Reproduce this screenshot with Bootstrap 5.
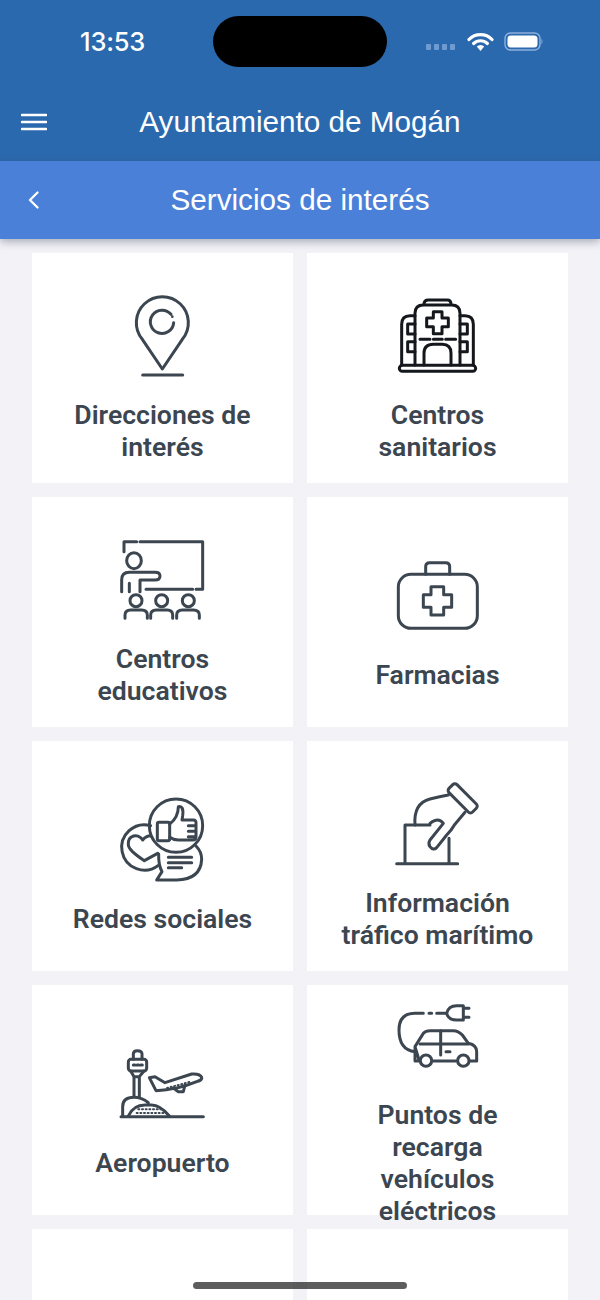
<!DOCTYPE html>
<html lang="es">
<head>
<meta charset="utf-8">
<title>Servicios de interés</title>
<link href="https://cdn.jsdelivr.net/npm/bootstrap@5.3.0/dist/css/bootstrap.min.css" rel="stylesheet">
<style>
html,body{height:1300px;overflow:hidden}
body{background:#f2f2f7;font-family:"Liberation Sans",Arial,sans-serif;position:relative}
.top-head{background:#2b69ae;color:#fff}
.status-row{display:grid;grid-template-columns:1fr 174px 1fr;height:83px;padding-top:16px}
.clock{font-size:25.5px;line-height:51px;padding-left:80px;height:51px;font-family:"Inter","Liberation Sans",sans-serif;font-weight:500;letter-spacing:-.2px}
.island{background:#000;height:51px;border-radius:26px}
.status-icons{height:50px;padding-left:39px}
.sig-dots{width:30px;height:6px;margin-top:12px;margin-right:11px}
.bar-row{display:grid;grid-template-columns:1fr auto 1fr;align-items:center;height:78px}
.bar-title{font-size:29.7px;line-height:36px;white-space:nowrap}
.sub-bar{background:#4b80d8;color:#fff;box-shadow:0 3px 8px rgba(40,50,70,.35);position:relative}
.bar-lead{padding-left:21px}
.back-lead{padding-left:28px}
.tile-grid{display:grid;grid-template-columns:261px 261px;gap:14px;padding:14px 32px 0;justify-content:space-between;height:1061px;overflow:hidden}
.tile{background:#fff;height:230px;display:flex;flex-direction:column;align-items:center;text-align:center}
.tile svg{display:block;flex:none;fill:none;stroke:#3c4650;stroke-width:9;stroke-linecap:round;stroke-linejoin:round}
.tile svg .solid{fill:#3c4650;stroke:none}
.tile-label{color:#3c4650;font-family:Roboto,"Liberation Sans",sans-serif;font-weight:600;font-size:26.6px;line-height:32px;width:205px;flex:none}
.ic-pin{width:100px;height:110px;margin-top:27px;margin-bottom:9px;margin-right:5px}
.ic-hosp{width:105px;height:100px;margin-top:32px;margin-bottom:14px}
.ic-hosp.stroke-dark{stroke:#14181c}
.ic-teach{width:105px;height:100px;margin-top:33px;margin-bottom:13px}
.ic-kit{width:105px;height:90px;margin-top:53px;margin-bottom:19px}
.ic-soc{width:105px;height:100px;margin-top:49px;margin-bottom:13px}
.ic-vote{width:105px;height:100px;margin-top:34px;margin-bottom:12px}
.ic-air{width:105px;height:85px;margin-top:55px;margin-bottom:22px}
.ic-ev{width:105px;height:85px;margin-top:10px;margin-bottom:19px}
.home-bar{position:absolute;left:193px;top:1282px;width:214px;height:7px;border-radius:4px;background:rgba(30,30,30,.72)}
</style>
</head>
<body>
<header class="top-head">
  <div class="status-row">
    <div class="clock">13:53</div>
    <div class="island"></div>
    <div class="status-icons d-flex align-items-center">
      <svg class="sig-dots" viewBox="0 0 30 6"><g fill="#6f9bd0"><rect x="0" y="0" width="5" height="6" rx="1"/><rect x="8" y="0" width="5" height="6" rx="1"/><rect x="16" y="0" width="5" height="6" rx="1"/><rect x="24" y="0" width="5" height="6" rx="1"/></g></svg>
      <svg width="27" height="19" viewBox="0 0 27 19"><path d="M2 7.5A16 16 0 0 1 25 7.5" fill="none" stroke="#fff" stroke-width="3.2" stroke-linecap="round"/><path d="M6.6 11.5A10 10 0 0 1 20.4 11.5" fill="none" stroke="#fff" stroke-width="3.2" stroke-linecap="round"/><path d="M9.8 14.5A5.2 5.2 0 0 1 17.2 14.5L13.5 19Z" fill="#fff"/></svg>
      <svg class="ms-2" width="42" height="19" viewBox="0 0 42 19"><rect x="3" y="1" width="35" height="17" rx="5.5" fill="none" stroke="#8db0dc" stroke-width="1.4"/><rect x="5.5" y="3.5" width="30" height="12" rx="3.5" fill="#fff"/><path d="M39.5 6.5Q41.5 9.5 39.5 12.5Z" fill="#8db0dc"/></svg>
    </div>
  </div>
  <div class="bar-row">
    <div class="bar-lead">
      <svg class="d-block" width="26" height="18" viewBox="0 0 26 18"><path d="M1 2H25M1 9H25M1 16H25" stroke="#fff" stroke-width="2.6" stroke-linecap="round"/></svg>
    </div>
    <div class="bar-title">Ayuntamiento de Mogán</div>
    <div></div>
  </div>
</header>
<div class="sub-bar bar-row">
  <div class="back-lead">
    <svg class="d-block" width="11" height="18" viewBox="0 0 11 18"><path d="M9.5 1.5 2 9l7.5 7.5" fill="none" stroke="#fff" stroke-width="2.3" stroke-linecap="round" stroke-linejoin="round"/></svg>
  </div>
  <div class="bar-title">Servicios de interés</div>
  <div></div>
</div>
<main class="tile-grid">
  <div class="tile">
    <svg class="ic-pin" viewBox="0 0 300 330"><path d="M157 267 97 178A78 78 0 1 1 217 178Z"/><path d="M183 103A35 35 0 1 0 191 128"/><circle class="solid" cx="187" cy="110" r="4"/><path d="M98 285H218"/></svg>
    <div class="tile-label">Direcciones de interés</div>
  </div>
  <div class="tile">
    <svg class="ic-hosp stroke-dark" viewBox="0 0 315 300"><path d="M117 58Q117 45 130 45H187Q198 45 198 58"/><path d="M90 240V85Q90 60 115 60H200Q225 60 225 85V240"/><path d="M90 92H75Q50 92 50 118V240M225 92H240Q265 92 265 118V240"/><path d="M90 117H68V147H90M90 170H68V200H90M225 117H247V147H225M225 170H247V200H225"/><path d="M145 80H171V99H190V125H171V146H145V125H125V99H145Z"/><path d="M105 163H135M145 163H172M182 163H212"/><path d="M117 240V205Q117 178 145 178H172Q198 178 198 205V240"/><rect x="43" y="241" width="229" height="18" rx="9"/></svg>
    <div class="tile-label">Centros sanitarios</div>
  </div>
  <div class="tile">
    <svg class="ic-teach" viewBox="0 0 315 300"><path d="M42 65V35H80M90 35H278V178H258M248 178H108"/><ellipse cx="72" cy="92" rx="22" ry="24"/><path d="M35 185V150Q35 127 58 127H135Q150 127 150 138Q150 150 135 150H90V185M58 160V185"/><circle cx="78" cy="212" r="18"/><circle cx="155" cy="212" r="18"/><circle cx="235" cy="212" r="18"/><path d="M45 265V255Q45 240 62 240H95Q112 240 112 255V265M122 265V255Q122 240 139 240H172Q188 240 188 255V265M200 265V255Q200 240 217 240H250Q268 240 268 255V265"/></svg>
    <div class="tile-label">Centros educativos</div>
  </div>
  <div class="tile">
    <svg class="ic-kit" viewBox="0 0 315 270"><rect x="40" y="73" width="237" height="162" rx="38"/><path d="M122 73V50Q122 38 134 38H182Q194 38 194 50V73"/><path d="M138 110H176V134H200V172H176V195H138V172H115V134H138Z"/></svg>
    <div class="tile-label">Farmacias</div>
  </div>
  <div class="tile">
    <svg class="ic-soc" viewBox="0 0 315 300"><circle cx="198" cy="107" r="80"/><rect x="142" y="97" width="37" height="55" rx="5"/><path d="M179 102Q205 82 205 50Q222 46 218 77L216 90H250Q259 90 258 100V140Q258 150 248 150H205Q190 150 179 142M258 107H235M258 124H235M258 140H235"/><path d="M122 107A68 68 0 1 0 145 226"/><path d="M122 137Q108 137 98 150C85 128 52 135 55 165C57 182 85 200 103 212L143 190"/><path d="M258 168Q275 185 275 208Q272 268 200 270H140L156 245Q145 225 146 192"/><path d="M175 202H245M175 218H245M175 233H215"/></svg>
    <div class="tile-label">Redes sociales</div>
  </div>
  <div class="tile">
    <svg class="ic-vote" viewBox="0 0 315 300"><path d="M35 266H218M60 266V150H135M192 190V266"/><path d="M90 150Q85 85 135 72Q165 65 190 60M240 112 208 150Q200 165 185 180L155 218Q145 228 135 215Q128 205 135 195L175 145Q160 125 135 145"/><rect x="183" y="53" width="100" height="34" rx="9" transform="rotate(45 233 70)"/></svg>
    <div class="tile-label">Información tráfico marítimo</div>
  </div>
  <div class="tile">
    <svg class="ic-air" viewBox="0 0 315 255"><path d="M70 58V42Q70 32 82 32Q96 32 96 42V58"/><rect x="55" y="58" width="55" height="35" rx="8"/><path d="M62 93 72 110H88L102 93M72 110V170M88 110V170"/><path d="M70 75H75M81 75H86M92 75H97"/><path d="M38 228V200Q38 172 72 172Q95 172 115 188M55 228Q70 195 105 195H125Q150 195 178 228"/><path d="M85 208H160M80 219H165" stroke-dasharray="3 8" stroke-width="6"/><path d="M33 230H280"/><path d="M275 112Q270 100 245 102L165 128 135 110 118 113 138 152Q200 150 260 125Q278 120 275 112Z"/><path d="M190 144 205 155H220L225 135"/><path d="M170 135H240" stroke-dasharray="3 8" stroke-width="6" transform="rotate(-15 205 135)"/></svg>
    <div class="tile-label">Aeropuerto</div>
  </div>
  <div class="tile">
    <svg class="ic-ev" viewBox="0 0 315 255"><path d="M115 55H90Q42 55 42 105Q42 165 90 170M132 55H140M155 55H185"/><path d="M185 55Q190 32 215 32H235V75H215Q190 75 185 55ZM235 40H252M235 67H252"/><path d="M90 155 115 115Q122 107 135 107H205Q220 107 232 120L250 145Q275 150 275 170V198H255M213 198H145M103 198H90V155Z"/><path d="M105 147H250M167 107V180M183 170H195"/><circle cx="123" cy="197" r="17"/><circle cx="235" cy="197" r="17"/></svg>
    <div class="tile-label">Puntos de recarga vehículos eléctricos</div>
  </div>
  <div class="tile"></div>
  <div class="tile"></div>
</main>
<div class="home-bar"></div>
<script src="https://cdn.jsdelivr.net/npm/bootstrap@5.3.0/dist/js/bootstrap.bundle.min.js"></script>
</body>
</html>
